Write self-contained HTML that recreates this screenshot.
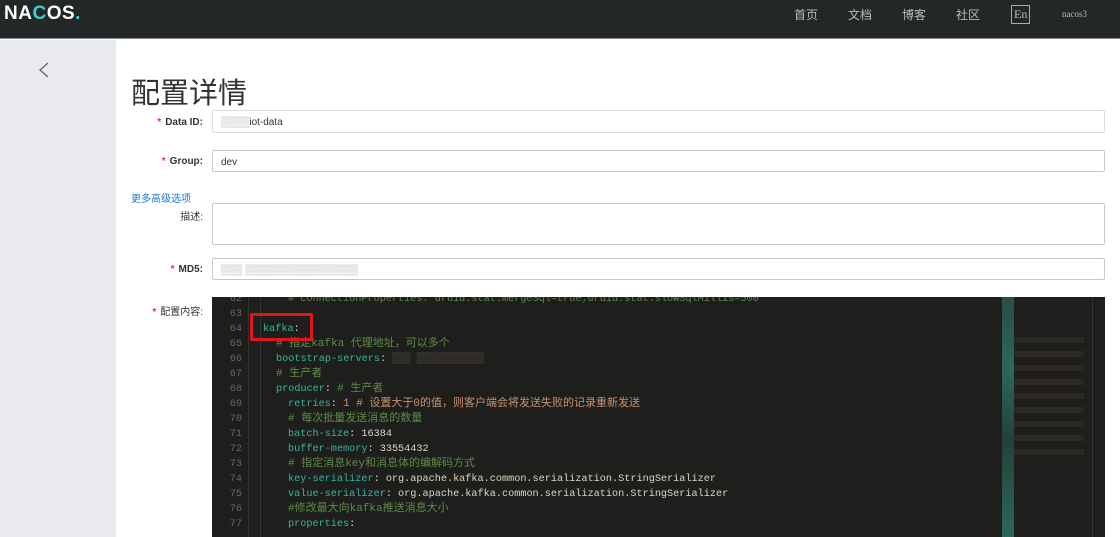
<!DOCTYPE html><html><head><meta charset="utf-8"><style>
*{margin:0;padding:0;box-sizing:border-box}
body{width:1120px;height:537px;overflow:hidden;background:#fff;font-family:"Liberation Sans","Noto Sans CJK SC",sans-serif;position:relative}
.hd{position:absolute;left:0;top:0;width:1120px;height:39px;background:#212827;border-bottom:1px solid #888}
.logo{position:absolute;left:4px;top:3px;color:#fff;font-size:19px;font-weight:bold;letter-spacing:0.5px}
.nav{position:absolute;top:6px;color:#bbb;font-size:12px}
.side{position:absolute;left:0;top:40px;width:116px;height:497px;background:#e8eaed}
.a{position:absolute}
.lbl{position:absolute;right:917px;font-size:10px;color:#333;font-weight:bold;white-space:nowrap}
.lbl b{color:#e34;margin-right:4px}
.in{position:absolute;left:212px;width:893px;border:1px solid #c8c8c8;border-radius:2px;font-size:10px;color:#333;padding:6px 8px}
.ed{position:absolute;left:212px;top:297px;width:893px;height:240px;background:#1e1f1c;font-family:"Liberation Mono","Noto Sans CJK SC",monospace;font-size:10.2px;overflow:hidden}
.ln{position:absolute;left:0;width:30px;text-align:right;color:#666;line-height:15px;height:15px}
.cd{position:absolute;white-space:pre;line-height:15px;height:15px}
.c,.z{font-size:11px}
.k{color:#39b3a0}.c{color:#5d8a48}.v{color:#d8d8c0}.z{color:#c89070}
</style></head><body>
<div class="hd"><div class="logo">NA<span style="color:#4cc">C</span>OS<span style="color:#4cc">.</span></div>
<span class="nav" style="left:794px">首页</span><span class="nav" style="left:848px">文档</span><span class="nav" style="left:902px">博客</span><span class="nav" style="left:956px">社区</span>
<span class="nav" style="left:1011px;top:5px;border:1px solid #aaa;padding:1px 2px;font-family:'Liberation Serif',serif">En</span>
<span class="nav" style="left:1062px;font-size:9px;top:9px;font-family:'Liberation Serif',serif">nacos3</span></div>
<div class="side"><svg class="a" style="left:38px;top:22px" width="12" height="16"><path d="M10 1 L2 8 L10 15" stroke="#666" stroke-width="1.3" fill="none"/></svg></div>
<div class="a" style="left:131px;top:70px;font-size:29px;color:#333">配置详情</div>
<div class="lbl" style="top:117px"><b>*</b>Data ID:</div>
<div class="in" style="top:110px;height:23px;border-color:#ddd"><span style="color:#aaa">▒▒▒▒</span>iot-data</div>
<div class="lbl" style="top:156px"><b>*</b>Group:</div>
<div class="in" style="top:150px;height:22px">dev</div>
<div class="a" style="left:131px;top:190px;font-size:10px;color:#1a7ad9">更多高级选项</div>
<div class="lbl" style="top:208px;font-weight:normal">描述:</div>
<div class="in" style="top:203px;height:42px"></div>
<div class="lbl" style="top:264px"><b>*</b>MD5:</div>
<div class="in" style="top:258px;height:22px;color:#aaa">▒▒▒ ▒▒▒▒▒▒▒▒▒▒▒▒▒▒▒▒</div>
<div class="lbl" style="top:303px;font-weight:normal"><b>*</b>配置内容:</div>
<div class="ed">
<div class="a" style="left:36px;top:0;width:1px;height:240px;background:#333"></div>
<div class="a" style="left:48px;top:0;width:1px;height:240px;background:#333"></div>
<div class="ln" style="top:-5px">62</div><div class="cd c" style="left:76px;top:-5px;font-size:10.2px"># connectionProperties: druid.stat.mergeSql=true;druid.stat.slowSqlMillis=500</div>
<div class="ln" style="top:10px">63</div>
<div class="ln" style="top:25px">64</div><div class="cd" style="left:51px;top:25px"><span class="k">kafka</span><span class="v">:</span></div>
<div class="ln" style="top:40px">65</div><div class="cd c" style="left:64px;top:40px"># 指定kafka 代理地址，可以多个</div>
<div class="ln" style="top:55px">66</div><div class="cd" style="left:64px;top:55px"><span class="k">bootstrap-servers</span><span class="v">: </span><span style="color:#6a5a50">▒▒▒ ▒▒▒▒▒▒▒▒▒▒▒</span></div>
<div class="ln" style="top:70px">67</div><div class="cd c" style="left:64px;top:70px"># 生产者</div>
<div class="ln" style="top:85px">68</div><div class="cd" style="left:64px;top:85px"><span class="k">producer</span><span class="v">: </span><span class="c"># 生产者</span></div>
<div class="ln" style="top:100px">69</div><div class="cd" style="left:76px;top:100px"><span class="k">retries</span><span class="v">: </span><span class="z">1 # 设置大于0的值，则客户端会将发送失败的记录重新发送</span></div>
<div class="ln" style="top:115px">70</div><div class="cd c" style="left:76px;top:115px"># 每次批量发送消息的数量</div>
<div class="ln" style="top:130px">71</div><div class="cd" style="left:76px;top:130px"><span class="k">batch-size</span><span class="v">: 16384</span></div>
<div class="ln" style="top:145px">72</div><div class="cd" style="left:76px;top:145px"><span class="k">buffer-memory</span><span class="v">: 33554432</span></div>
<div class="ln" style="top:160px">73</div><div class="cd c" style="left:76px;top:160px"># 指定消息key和消息体的编解码方式</div>
<div class="ln" style="top:175px">74</div><div class="cd" style="left:76px;top:175px"><span class="k">key-serializer</span><span class="v">: org.apache.kafka.common.serialization.StringSerializer</span></div>
<div class="ln" style="top:190px">75</div><div class="cd" style="left:76px;top:190px"><span class="k">value-serializer</span><span class="v">: org.apache.kafka.common.serialization.StringSerializer</span></div>
<div class="ln" style="top:205px">76</div><div class="cd c" style="left:76px;top:205px">#修改最大向kafka推送消息大小</div>
<div class="ln" style="top:220px">77</div><div class="cd" style="left:76px;top:220px"><span class="k">properties</span><span class="v">:</span></div>
<div class="a" style="left:790px;top:0;width:12px;height:240px;background:linear-gradient(#2a5a50,#2f7a6a 30%,#254a42 60%,#2f7a6a);opacity:.8"></div>
<div class="a" style="left:802px;top:40px;width:70px;height:120px;background:repeating-linear-gradient(#2e2822 0 6px,#1e1f1c 6px 14px)"></div>
<div class="a" style="left:880px;top:0;width:1px;height:240px;background:#333"></div>
</div>
<div class="a" style="left:250px;top:313px;width:63px;height:28px;border:3px solid #e0161c;border-radius:2px"></div>
</body></html>
